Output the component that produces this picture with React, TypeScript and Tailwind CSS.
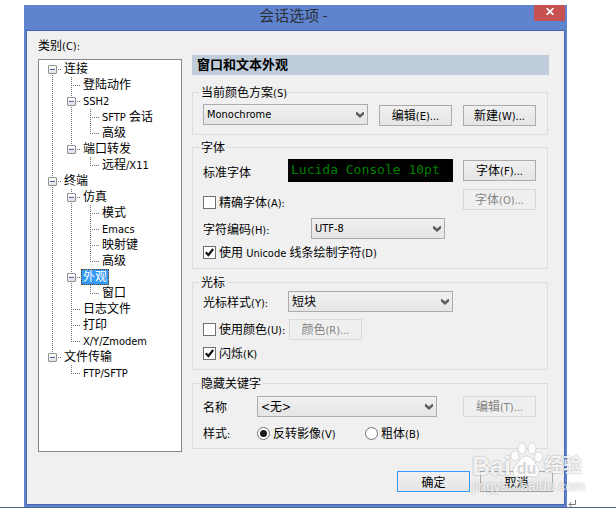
import { useState } from "react";
import type { ReactNode } from "react";
import clsx from "clsx";

/* Latin runs are set one pixel smaller than the Chinese text around them. */
function Mixed({ text }: { text: string }) {
  const parts = text.split(/([\u4e00-\u9fff]+)/).filter(Boolean);
  return (
    <span className="whitespace-pre">
      {parts.map((part, i) => (
        <span key={i} className={/[\u4e00-\u9fff]/.test(part) ? "text-[12px]" : "text-[11px]"}>
          {part}
        </span>
      ))}
    </span>
  );
}

type TreeNode = { name: string; children?: TreeNode[] };

const categories: TreeNode[] = [
  {
    name: "连接",
    children: [
      { name: "登陆动作" },
      { name: "SSH2", children: [{ name: "SFTP 会话" }, { name: "高级" }] },
      { name: "端口转发", children: [{ name: "远程/X11" }] },
    ],
  },
  {
    name: "终端",
    children: [
      {
        name: "仿真",
        children: [{ name: "模式" }, { name: "Emacs" }, { name: "映射键" }, { name: "高级" }],
      },
      { name: "外观", children: [{ name: "窗口" }] },
      { name: "日志文件" },
      { name: "打印" },
      { name: "X/Y/Zmodem" },
    ],
  },
  { name: "文件传输", children: [{ name: "FTP/SFTP" }] },
];

function Guide({ up, down, across }: { up?: boolean; down?: boolean; across?: boolean }) {
  return (
    <svg width="19" height="16" className="block shrink-0" stroke="#707070" strokeDasharray="1 1" aria-hidden="true">
      {up && <path d="M9.5 0V8" />}
      {down && <path d="M9.5 8V16" />}
      {across && <path d="M9 8.5H18" />}
    </svg>
  );
}

type BranchProps = {
  nodes: TreeNode[];
  trail: boolean[];
  path: string;
  selected: string;
  onSelect: (id: string) => void;
};

function Branch({ nodes, trail, path, selected, onSelect }: BranchProps) {
  return (
    <ul role={trail.length ? "group" : "tree"} aria-label={trail.length ? undefined : "类别"}>
      {nodes.map((node, i) => {
        const id = path + "/" + node.name;
        const more = i < nodes.length - 1;
        const active = id === selected;
        return (
          <li key={id} role="treeitem" aria-selected={active}>
            <div className="flex h-4 items-center">
              {trail.map((line, k) => (
                <Guide key={k} up={line} down={line} />
              ))}
              <span className="grid justify-items-center">
                <span className="col-start-1 row-start-1">
                  <Guide up={trail.length > 0 || i > 0} down={more} across />
                </span>
                {node.children && (
                  <span className="col-start-1 row-start-1 mt-1 flex h-[9px] w-[9px] items-center justify-center rounded-[1px] border border-[#919191] bg-linear-to-b from-white to-[#e0e0e0]">
                    <span className="h-px w-[5px] bg-[#4b63a7]" />
                  </span>
                )}
              </span>
              <button
                type="button"
                onClick={() => onSelect(id)}
                className={clsx(
                  "flex h-4 items-center px-[2px] leading-4",
                  active && "bg-[#3399ff] text-white outline-1 -outline-offset-1 outline-dotted outline-[#6b3a00]",
                )}
              >
                <Mixed text={node.name} />
              </button>
            </div>
            {node.children && (
              <Branch
                nodes={node.children}
                trail={[...trail, more]}
                path={id}
                selected={selected}
                onSelect={onSelect}
              />
            )}
          </li>
        );
      })}
    </ul>
  );
}

function PushButton({
  text,
  disabled,
  primary,
  className,
}: {
  text: string;
  disabled?: boolean;
  primary?: boolean;
  className?: string;
}) {
  return (
    <button
      type="button"
      disabled={disabled}
      className={clsx(
        "flex h-[21px] w-[73px] shrink-0 items-center justify-center border pt-[2px] leading-4",
        disabled
          ? "border-[#d9d9d9] bg-[#efefef] text-[#838383]"
          : "bg-linear-to-b from-[#f0f0f0] to-[#e5e5e5]",
        !disabled && (primary ? "border-[#3399ff]" : "border-[#acacac]"),
        className,
      )}
    >
      <Mixed text={text} />
    </button>
  );
}

function Dropdown({ id, label, value, className }: { id: string; label?: string; value: string; className?: string }) {
  return (
    <span className={clsx("grid h-[21px] items-center", className)}>
      <select
        id={id}
        aria-label={label}
        className={clsx(
          "col-start-1 row-start-1 h-[21px] w-full appearance-none border border-[#acacac] bg-linear-to-b from-[#f0f0f0] to-[#e5e5e5] pt-px pr-4 pl-[3px] leading-4",
          /[\u4e00-\u9fff]/.test(value) ? "text-[12px]" : "text-[11px]",
        )}
      >
        <option>{value}</option>
      </select>
      <svg
        width="8"
        height="6"
        viewBox="0 0 8 6"
        aria-hidden="true"
        className="pointer-events-none col-start-1 row-start-1 mr-1 justify-self-end"
      >
        <path d="M0 0H1L4 2.5L7 0H8V2.5L4 6L0 2.5Z" fill="#606060" />
      </svg>
    </span>
  );
}

function Check({ text, checked }: { text: string; checked?: boolean }) {
  return (
    <label className="flex h-[15px] items-center gap-[3px] leading-4">
      <span className="grid place-items-center">
        <input
          type="checkbox"
          defaultChecked={checked}
          className="peer col-start-1 row-start-1 h-[13px] w-[13px] appearance-none border border-[#707070] bg-white"
        />
        <svg
          width="9"
          height="9"
          viewBox="0 0 9 9"
          fill="none"
          stroke="#111"
          strokeWidth="2.2"
          aria-hidden="true"
          className="pointer-events-none invisible col-start-1 row-start-1 peer-checked:visible"
        >
          <path d="M0.7 4.2L3.4 7L8.2 1" />
        </svg>
      </span>
      <span className="pt-[2px]">
        <Mixed text={text} />
      </span>
    </label>
  );
}

function Radio({ text, checked, className }: { text: string; checked?: boolean; className?: string }) {
  return (
    <label className={clsx("flex h-[15px] items-center gap-[3px] leading-4", className)}>
      <span className="grid place-items-center">
        <input
          type="radio"
          name="keyword-style"
          defaultChecked={checked}
          className="peer col-start-1 row-start-1 h-[13px] w-[13px] appearance-none rounded-full border border-[#707070] bg-white"
        />
        <span className="pointer-events-none invisible col-start-1 row-start-1 h-[7px] w-[7px] rounded-full bg-[#1c1c1c] peer-checked:visible" />
      </span>
      <span className="pt-[2px]">
        <Mixed text={text} />
      </span>
    </label>
  );
}

function Group({ title, className, children }: { title: string; className?: string; children: ReactNode }) {
  return (
    <fieldset className={clsx("mr-px min-w-0 border border-[#dcdcdc] pr-[11px] pl-[10px]", className)}>
      <legend className="-ml-1 h-[17px] px-[2px] pt-px leading-4">
        <Mixed text={title} />
      </legend>
      {children}
    </fieldset>
  );
}

function Watermark() {
  return (
    <div
      aria-hidden="true"
      className="pointer-events-none absolute top-[437px] left-[448px] w-[112px] font-['Liberation_Sans','Noto_Sans_CJK_SC',sans-serif] text-white/85 [text-shadow:0_0_2px_#00000060]"
    >
      <div className="flex h-9 items-end">
        <span className="w-[38px] text-[25px] leading-6 font-bold">Bai</span>
        <svg width="33" height="36" viewBox="0 0 33 36" className="shrink-0">
          <g fill="#ffffff" fillOpacity="0.85" stroke="#000000" strokeOpacity="0.12">
            <ellipse cx="5" cy="14" rx="4" ry="5" />
            <ellipse cx="12" cy="6.5" rx="4" ry="5.5" />
            <ellipse cx="22" cy="6.5" rx="4" ry="5.5" />
            <ellipse cx="28.5" cy="15" rx="4" ry="5" />
            <path d="M16.5 14C21 14 23 18 26 22C31 27 30 35 24 35C20 35 19 34 16.5 34C14 34 12 35 9 35C2 35 1 27 7 22C10 18 12 14 16.5 14Z" />
          </g>
          <text
            x="16.5"
            y="32"
            textAnchor="middle"
            fontSize="16"
            fontWeight="bold"
            fill="#d6d6d6"
            className="[text-shadow:none]"
          >
            du
          </text>
        </svg>
        <span className="pl-px text-[19px] leading-6 font-bold">经验</span>
      </div>
      <div className="text-[14px] leading-4 whitespace-nowrap">jingyan.baidu.com</div>
    </div>
  );
}

export default function App() {
  const [selected, setSelected] = useState("/终端/外观");
  return (
    <div className="bg-white pt-[5px] font-['DejaVu_Sans_Condensed','Noto_Sans_CJK_SC',sans-serif] text-[12px] leading-4 text-black">
      <div className="flex items-end pl-6">
        <div className="relative min-w-0 flex-1 bg-[#5f84cd] px-[2px] pb-[2px]">
          <header className="grid h-[25px] grid-cols-[27px_1fr_31px]">
            <h1 className="col-start-2 text-center font-['Noto_Sans_CJK_SC',sans-serif] text-[15px] leading-5 text-[#2b2f38]">
              会话选项 -
            </h1>
            <button
              type="button"
              aria-label="关闭"
              className="flex h-4 w-[31px] items-center justify-center bg-[#c75050]"
            >
              <svg width="8" height="7" viewBox="0 0 8 7" stroke="#fff" strokeWidth="1.8" className="-mt-[3px]">
                <path d="M0.6 0.2L7.4 6.8M7.4 0.2L0.6 6.8" />
              </svg>
            </button>
          </header>

          <main className="border border-[#4868ad] bg-[#f0f0f0] pt-[7px] pr-[11px] pb-3 pl-[11px]">
            <div className="flex gap-[10px] pr-1">
              <nav className="w-[144px] shrink-0">
                <p className="h-4 leading-4">
                  <Mixed text="类别(C):" />
                </p>
                <div className="mt-[5px] h-[393px] overflow-hidden border border-[#828790] bg-white pt-px pl-1">
                  <Branch nodes={categories} trail={[]} path="" selected={selected} onSelect={setSelected} />
                </div>
              </nav>

              <section className="min-w-0 flex-1 pt-[17px]">
                <h2 className="h-5 bg-[#bfcddb] pl-[5px] text-[13px] leading-5 font-bold">窗口和文本外观</h2>

                <Group title="当前颜色方案(S)" className="mt-[9px] pt-[3px] pb-2">
                  <div className="flex h-[22px] items-end gap-[11px]">
                    <Dropdown id="scheme" label="当前颜色方案" value="Monochrome" className="w-[165px] self-start" />
                    <PushButton text="编辑(E)..." />
                    <PushButton text="新建(W)..." className="ml-auto" />
                  </div>
                </Group>

                <Group title="字体" className="mt-1 pt-[3px] pb-2">
                  <div className="flex h-[23px] items-center">
                    <span className="w-[85px] pt-1">标准字体</span>
                    <output className="h-[23px] w-[165px] bg-black pl-[3px] font-['DejaVu_Sans_Mono',monospace] text-[13px] leading-[21px] whitespace-nowrap text-[#008000]">
                      Lucida Console 10pt
                    </output>
                    <PushButton text="字体(F)..." className="ml-auto" />
                  </div>
                  <div className="mt-[7px] flex items-end justify-between">
                    <Check text="精确字体(A):" />
                    <PushButton text="字体(O)..." disabled />
                  </div>
                  <div className="mt-2 flex items-center">
                    <label htmlFor="encoding" className="w-[108px] pt-1">
                      <Mixed text="字符编码(H):" />
                    </label>
                    <Dropdown id="encoding" value="UTF-8" className="w-[134px]" />
                  </div>
                  <div className="mt-[6px]">
                    <Check text="使用 Unicode 线条绘制字符(D)" checked />
                  </div>
                </Group>

                <Group title="光标" className="mt-[5px] pb-2">
                  <div className="flex items-center">
                    <label htmlFor="cursor" className="w-[85px] pt-1">
                      <Mixed text="光标样式(Y):" />
                    </label>
                    <Dropdown id="cursor" value="短块" className="w-[165px]" />
                  </div>
                  <div className="mt-[7px] flex items-center">
                    <span className="w-[86px]">
                      <Check text="使用颜色(U):" />
                    </span>
                    <PushButton text="颜色(R)..." disabled />
                  </div>
                  <div className="mt-[6px]">
                    <Check text="闪烁(K)" checked />
                  </div>
                </Group>

                <Group title="隐藏关键字" className="mt-[5px] pt-1 pb-[7px]">
                  <div className="flex items-center">
                    <label htmlFor="keyword" className="w-[54px] pt-[2px]">
                      名称
                    </label>
                    <Dropdown id="keyword" value="<无>" className="w-[180px]" />
                    <PushButton text="编辑(T)..." disabled className="ml-auto" />
                  </div>
                  <div className="mt-[9px] flex items-center">
                    <span className="h-[15px] w-[54px] leading-4">
                      <Mixed text="样式:" />
                    </span>
                    <Radio text="反转影像(V)" checked className="w-[108px]" />
                    <Radio text="粗体(B)" />
                  </div>
                </Group>
              </section>
            </div>

            <footer className="mt-[19px] flex justify-end gap-[10px]">
              <PushButton text="确定" primary />
              <PushButton text="取消" />
            </footer>
          </main>
          <Watermark />
        </div>
        <div className="w-[49px] shrink-0 pl-[1px]">
          <svg width="8" height="7" viewBox="0 0 8 7" fill="none" stroke="#777" aria-hidden="true">
            <path d="M7.5 0V4.5H1M3.5 2L1 4.5L3.5 7" />
          </svg>
        </div>
      </div>
      <div className="h-px bg-[#4a6690]" />
    </div>
  );
}
